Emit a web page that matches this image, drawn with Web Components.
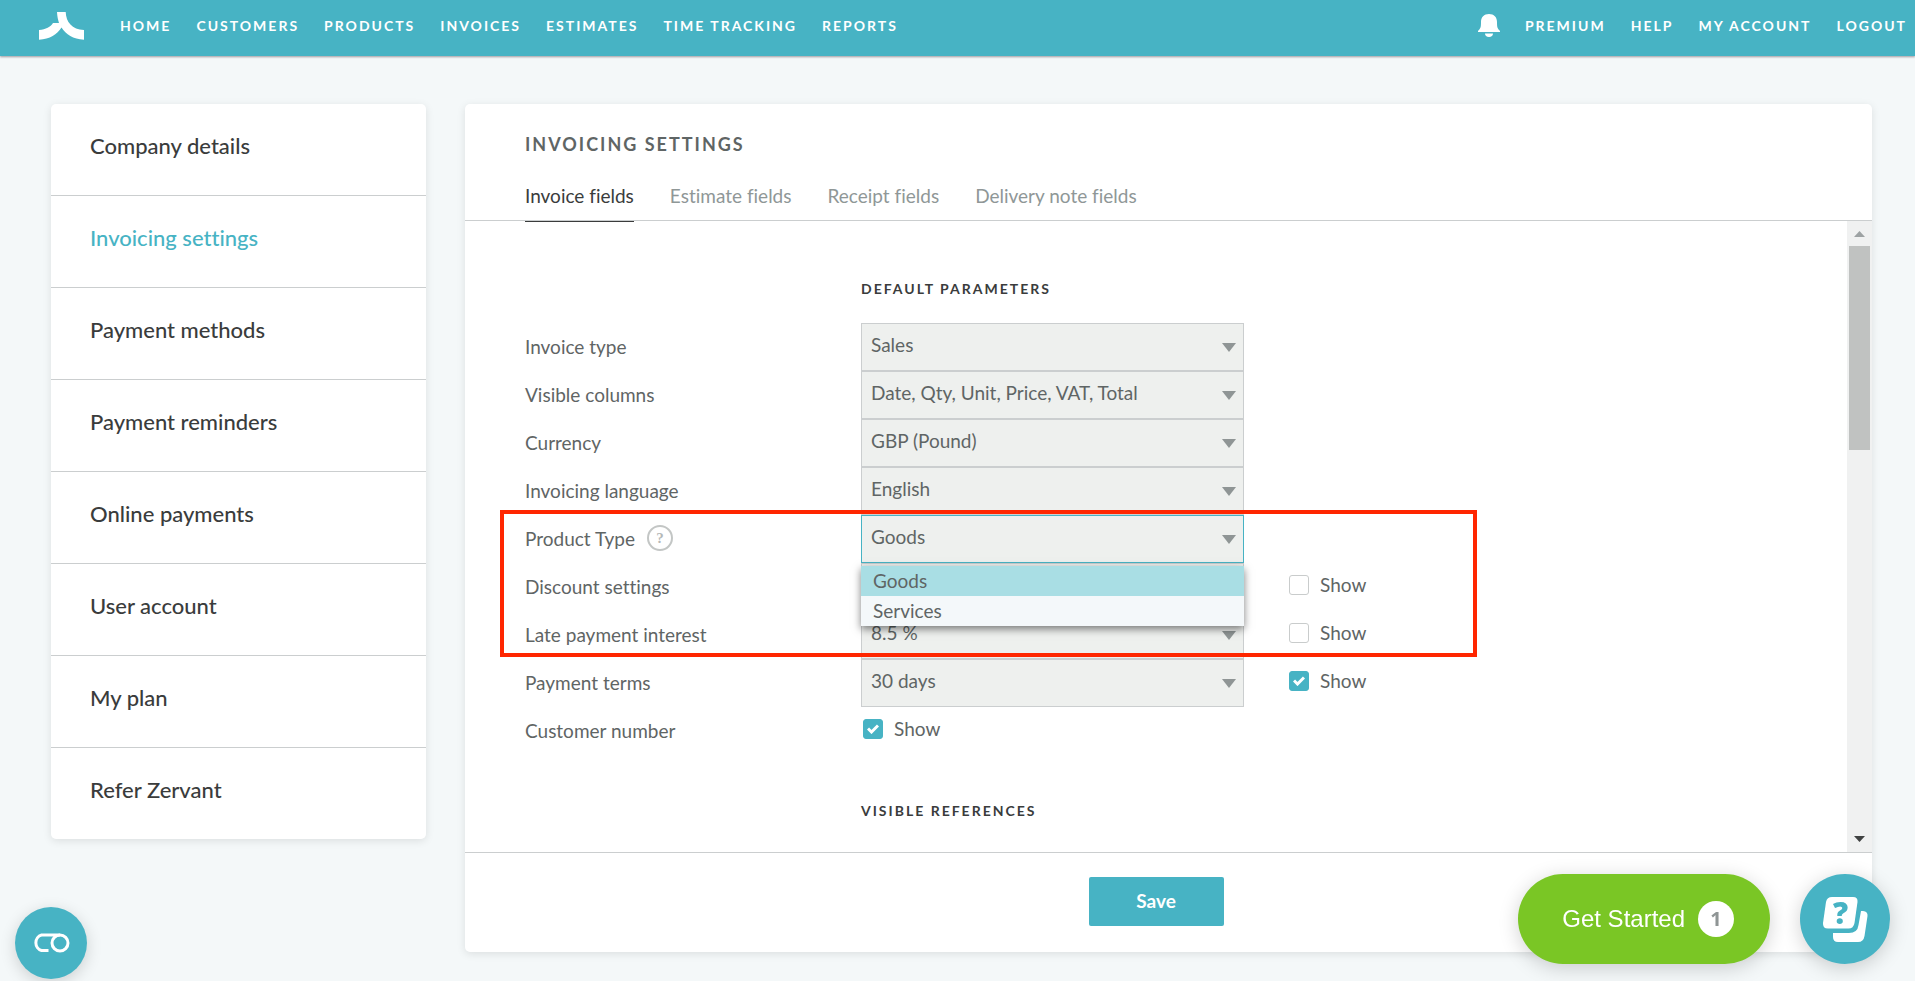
<!DOCTYPE html>
<html lang="en">
<head>
<meta charset="utf-8">
<title>Invoicing settings</title>
<style>
  html, body { margin: 0; }
  body {
    --teal: #47b3c4;
    --line: #cbcecf;
    --ink: #3a3c3c;
    --text: #5f6565;
    background: #f4f8f9;
    color: var(--text);
    font: 19px/24px Lato, "Open Sans", sans-serif;
    font-variant-ligatures: none;
  }
</style>
</head>
<body>
<app-shell>
  <top-nav slot="top">
    <a href="#home">HOME</a>
    <a href="#customers">CUSTOMERS</a>
    <a href="#products">PRODUCTS</a>
    <a href="#invoices">INVOICES</a>
    <a href="#estimates">ESTIMATES</a>
    <a href="#time">TIME TRACKING</a>
    <a href="#reports">REPORTS</a>
    <a slot="account" href="#premium">PREMIUM</a>
    <a slot="account" href="#help">HELP</a>
    <a slot="account" href="#account">MY ACCOUNT</a>
    <a slot="account" href="#logout">LOGOUT</a>
  </top-nav>
  <side-menu slot="side">
    <a href="#company">Company details</a>
    <a href="#invoicing" aria-current="page">Invoicing settings</a>
    <a href="#methods">Payment methods</a>
    <a href="#reminders">Payment reminders</a>
    <a href="#online">Online payments</a>
    <a href="#user">User account</a>
    <a href="#plan">My plan</a>
    <a href="#refer">Refer Zervant</a>
  </side-menu>
  <settings-card heading="INVOICING SETTINGS">
    <a slot="tab" href="#invoice-fields" aria-current="true">Invoice fields</a>
    <a slot="tab" href="#estimate-fields">Estimate fields</a>
    <a slot="tab" href="#receipt-fields">Receipt fields</a>
    <a slot="tab" href="#delivery-fields">Delivery note fields</a>
    <form-section heading="DEFAULT PARAMETERS">
      <field-row label="Invoice type" value="Sales"></field-row>
      <field-row label="Visible columns" value="Date, Qty, Unit, Price, VAT, Total"></field-row>
      <field-row label="Currency" value="GBP (Pound)"></field-row>
      <field-row label="Invoicing language" value="English"></field-row>
      <highlight-frame>
        <field-row label="Product Type" value="Goods" choices="Goods|Services" hint open></field-row>
        <field-row label="Discount settings" value="" show="off"></field-row>
        <field-row label="Late payment interest" value="8.5 %" show="off"></field-row>
      </highlight-frame>
      <field-row label="Payment terms" value="30 days" show="on"></field-row>
      <field-row label="Customer number" show="on"></field-row>
    </form-section>
    <form-section heading="VISIBLE REFERENCES"></form-section>
  </settings-card>
  <cookie-button slot="float-left"></cookie-button>
  <get-started slot="float-right" count="1">Get Started</get-started>
  <help-button slot="float-right"></help-button>
</app-shell>

<script>
const define = (name, render) => customElements.define(name, class extends HTMLElement {
  connectedCallback() {
    if (this.shadowRoot) return;
    this.attachShadow({ mode: 'open' }).innerHTML = render(this);
  }
});

define('app-shell', () => `
  <style>
    :host { display: flex; flex-direction: column; height: 100vh; min-height: 700px; }
    main { flex: 1; min-height: 0; display: flex; align-items: stretch; gap: 39px; padding: 48px 43px 29px 51px; }
    .left, .right { position: fixed; display: flex; gap: 30px; z-index: 5; }
    .left { left: 15px; bottom: 2px; }
    .right { right: 25px; bottom: 17px; }
  </style>
  <slot name="top"></slot>
  <main><slot name="side"></slot><slot></slot></main>
  <div class="left"><slot name="float-left"></slot></div>
  <div class="right"><slot name="float-right"></slot></div>`);

define('top-nav', () => `
  <style>
    :host { display: block; }
    header {
      display: flex; align-items: center; box-sizing: border-box; height: 56px;
      padding: 0 8px 5px 39px; background: var(--teal); color: #fff;
      box-shadow: 0 1px 2px rgba(60, 40, 50, .45);
      font-size: 14px; font-weight: 700; letter-spacing: 2px;
    }
    nav { display: flex; align-items: center; gap: 25px; }
    .main { flex: 1; margin-left: 36px; }
    .logo, button, svg { display: block; }
    button { border: 0; padding: 0; background: none; color: inherit; }
    ::slotted(a) { color: inherit; text-decoration: none; white-space: nowrap; }
  </style>
  <header>
    <a class="logo" href="#home" aria-label="Zervant">
      <svg width="45" height="28" viewBox="0 0 45 28" fill="#fff"><path d="M18 0h8.700C27 10 33 17.500 45 18v9.700C34 27 27 22.500 22.500 15.500 18 22.500 11 27 0 27.700V18c7-.500 11.500-3 14-7h6C19 8 18.200 4 18 0z"/></svg>
    </a>
    <nav class="main"><slot></slot></nav>
    <nav>
      <button type="button" aria-label="Notifications">
        <svg width="22" height="23" viewBox="0 0 22 23" fill="#fff"><path d="M3 8c0-5 3-8 8-8s8 3 8 8c0 5 .300 6.500 3 9v1H0v-1c2.700-2.500 3-4 3-9zM7 19.500h8c0 2-1.500 3.500-4 3.500s-4-1.500-4-3.500z"/></svg>
      </button>
      <slot name="account"></slot>
    </nav>
  </header>`);

define('side-menu', () => `
  <style>
    :host { display: block; flex: 0 0 375px; align-self: flex-start; }
    nav { background: #fff; border-radius: 5px; box-shadow: 0 2px 8px rgba(0, 0, 0, .1); }
    ::slotted(a) {
      display: block; padding: 27px 39px 34px; color: var(--ink); text-decoration: none;
      font-size: 22px; line-height: 30px; font-weight: 500; border-bottom: 1px solid var(--line);
    }
    ::slotted(a:last-of-type) { border-bottom: 0; }
    ::slotted(a[aria-current]) { color: var(--teal); }
  </style>
  <nav><slot></slot></nav>`);

define('settings-card', el => `
  <style>
    :host {
      display: flex; flex-direction: column; flex: 1; min-width: 0;
      background: #fff; border-radius: 5px; box-shadow: 0 2px 8px rgba(0, 0, 0, .1);
    }
    header { padding: 28px 60px 0; border-bottom: 1px solid var(--line); }
    h1 { margin: 0 0 28px; font-size: 18px; line-height: 24px; font-weight: 700; letter-spacing: 2px; }
    nav { display: flex; gap: 36px; margin-bottom: -2px; }
    ::slotted([slot=tab]) {
      color: #8f9797; text-decoration: none; padding-bottom: 13px; border-bottom: 1px solid transparent;
    }
    ::slotted([slot=tab][aria-current]) { color: var(--ink); border-bottom-color: var(--ink); }
    .body { flex: 1; min-height: 0; display: flex; }
    form { flex: 1; overflow: hidden; padding: 56px 60px 0; }
    .bar {
      flex: 0 0 25px; display: flex; flex-direction: column; align-items: center; justify-content: space-between;
      background: #f0f1f1;
    }
    .thumb { width: 21px; height: 204px; background: #c0c2c1; margin: 9px 0 auto; }
    .bar svg { display: block; margin: 10px 0 0; }
    .bar svg:last-child { margin: 0 0 10px; }
    footer {
      display: flex; justify-content: center; padding: 24px 25px 26px 0; border-top: 1px solid var(--line);
    }
    button {
      width: 135px; height: 49px; border: 0; border-radius: 2px; padding: 0 0 1px; background: var(--teal); color: #fff;
      font: 700 19px/24px Lato, sans-serif;
    }
  </style>
  <header>
    <h1>${el.getAttribute('heading')}</h1>
    <nav><slot name="tab"></slot></nav>
  </header>
  <div class="body">
    <form><slot></slot></form>
    <div class="bar" aria-hidden="true">
      <svg width="11" height="6" viewBox="0 0 11 6"><path d="M5.500 0 11 6H0z" fill="#9da2a3"/></svg>
      <div class="thumb"></div>
      <svg width="11" height="6" viewBox="0 0 11 6"><path d="M0 0h11L5.500 6z" fill="#404242"/></svg>
    </div>
  </div>
  <footer><button type="button">Save</button></footer>`);

define('form-section', el => `
  <style>
    :host { display: block; margin-bottom: 44px; }
    h2 { margin: 0 0 22px 336px; color: var(--ink); font-size: 14px; line-height: 24px; font-weight: 700; letter-spacing: 2px; }
  </style>
  <section><h2>${el.getAttribute('heading')}</h2><slot></slot></section>`);

define('highlight-frame', () => `
  <style>
    :host { display: block; position: relative; }
    .frame {
      position: absolute; inset: -5px auto 2px -25px; width: 977px; box-sizing: border-box;
      border: 4px solid #ff2600; pointer-events: none; z-index: 3;
    }
  </style>
  <slot></slot><div class="frame"></div>`);

define('field-row', el => {
  const label = el.getAttribute('label');
  const value = el.getAttribute('value');
  const show = el.getAttribute('show');
  const choices = (el.getAttribute('choices') || value || '').split('|').filter(Boolean);
  const open = el.hasAttribute('open');
  const picker = value === null ? '' : `
    <div class="picker">
      <select id="field">${choices.map(c => `<option>${c}</option>`).join('')}</select>
      <svg class="arrow" width="14" height="9" viewBox="0 0 14 9"><path d="M0 0h14L7 9z" fill="#8f9595"/></svg>
      ${open ? `<ul role="listbox" aria-label="${label}">${choices.map(c =>
        `<li role="option" aria-selected="${c === value}">${c}</li>`).join('')}</ul>` : ''}
    </div>`;
  const toggle = show === null ? '' : `
    <label class="toggle">
      <span class="box">
        <input type="checkbox" ${value === null ? 'id="field"' : ''} ${show === 'on' ? 'checked' : ''}>
        <svg width="12" height="10" viewBox="0 0 12 10" fill="none" stroke="#fff" stroke-width="3"><path d="M1 4.500 4.500 8 11 1.500"/></svg>
      </span>Show
    </label>`;
  return `
  <style>
    :host { display: block; }
    .row { display: grid; grid-template-columns: 336px 383px auto; height: 48px; align-items: center; }
    .name { display: flex; align-items: center; gap: 12px; }
    .hint {
      width: 26px; height: 26px; box-sizing: border-box; padding: 0; margin-bottom: 2px; border: 2px solid #c3c6c5;
      border-radius: 50%; background: none; color: #b4b8b7; font: 700 15px/20px "Liberation Serif", serif;
    }
    .picker { position: relative; display: grid; align-items: center; }
    .picker > select, .picker > svg { grid-area: 1 / 1; }
    select {
      appearance: none; width: 100%; height: 48px; box-sizing: border-box; margin: 0; padding: 0 40px 4px 9px;
      border: 1px solid var(--line); border-radius: 0; background: #eef0ee; color: var(--text); font: inherit;
    }
    :host([open]) select { border-color: var(--teal); }
    .arrow { justify-self: end; margin-right: 8px; pointer-events: none; }
    ul {
      position: absolute; top: 51px; left: 0; right: 0; z-index: 2; margin: 0; padding: 0; list-style: none;
      background: #f4f8fa; box-shadow: 0 3px 8px rgba(0, 0, 0, .5);
    }
    li { padding-left: 12px; line-height: 30px; }
    li[aria-selected=true] { background: #a9dee4; }
    .toggle { display: flex; align-items: center; gap: 11px; margin: 0 0 4px 45px; }
    .picker-less .toggle { margin-left: 2px; }
    .box { display: grid; place-items: center; }
    .box > * { grid-area: 1 / 1; }
    input {
      appearance: none; width: 20px; height: 20px; margin: 0; box-sizing: border-box;
      border: 1px solid #c9cccc; border-radius: 3px; background: #fff;
    }
    input:checked { background: var(--teal); border-color: var(--teal); }
    .box svg { display: none; pointer-events: none; }
    input:checked + svg { display: block; }
  </style>
  <div class="row ${value === null ? 'picker-less' : ''}">
    <div class="name"><label for="field">${label}</label>${el.hasAttribute('hint') ? '<button class="hint" type="button">?</button>' : ''}</div>
    ${picker}${toggle}
  </div>`;
});

define('cookie-button', () => `
  <style>
    :host { display: block; }
    button {
      display: grid; place-items: center; width: 72px; height: 72px; padding: 0; border: 0; border-radius: 50%;
      background: var(--teal); box-shadow: 0 4px 16px rgba(0, 0, 0, .16);
    }
  </style>
  <button type="button" aria-label="Cookie settings">
    <svg width="38" height="20" viewBox="0 0 38 20" fill="none" stroke="#fff" stroke-width="3">
      <path d="M16.500 17.500H9.500a7.500 8 0 0 1 0-15.500H28"/><circle cx="28" cy="10" r="8"/>
    </svg>
  </button>`);

define('get-started', el => `
  <style>
    :host { display: block; }
    button {
      display: flex; align-items: center; gap: 13px; height: 90px; padding: 0 36px 0 44px; border: 0; border-radius: 45px;
      background: #7ac625; color: #fff; font: 24px/30px "Liberation Sans", Arial, sans-serif;
      box-shadow: 0 4px 20px rgba(0, 0, 0, .18);
    }
    .count {
      width: 36px; border-radius: 50%; background: #fff; color: #8f9595;
      font: 700 20px/36px "Open Sans", sans-serif;
    }
  </style>
  <button type="button"><slot></slot><span class="count">${el.getAttribute('count')}</span></button>`);

define('help-button', () => `
  <style>
    :host { display: block; }
    button {
      display: grid; place-items: center; width: 90px; height: 90px; padding: 0; border: 0; border-radius: 50%;
      background: var(--teal); box-shadow: 0 4px 20px rgba(0, 0, 0, .18);
    }
    text { fill: var(--teal); font: 900 30px "Open Sans", sans-serif; }
  </style>
  <button type="button" aria-label="Help">
    <svg width="90" height="90" viewBox="0 0 90 90" fill="#fff">
      <path d="M32 23h21q5 0 4.500 5l-3 21q-1 5.500-6 5.500H28q-5.500 0-5-5.500l3-21q1-5 6-5z"/>
      <path d="M61 37h2q5 .500 4.500 5l-3 20q-1 6-6.500 6H38q-5 0-5-5v-4h16q8.500 0 9.500-8z"/>
      <text x="33" y="50">?</text>
    </svg>
  </button>`);
</script>
</body>
</html>
